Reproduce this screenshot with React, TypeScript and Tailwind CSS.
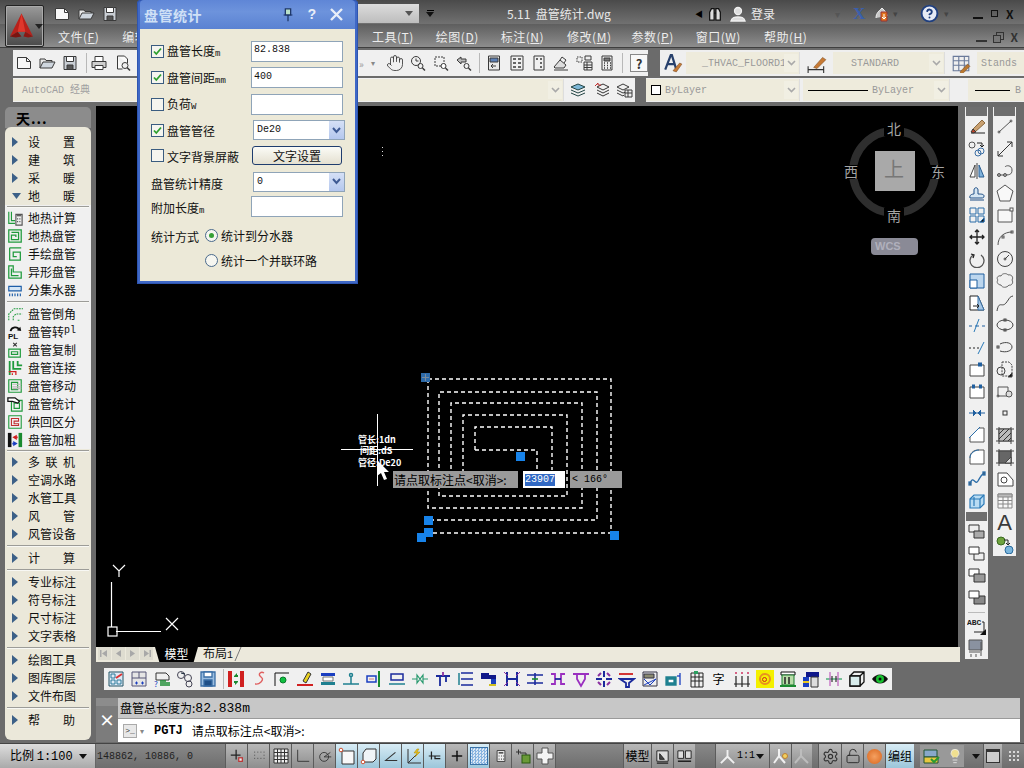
import React from 'react';
import { Hand, Settings, LockOpen, Lightbulb, CircleHelp, Plus } from 'lucide-react';

const MONO = "font-['Liberation_Mono','Noto_Sans_CJK_SC',monospace]";

type SP = { s?: number; children: React.ReactNode; c?: string; w?: number };
const Svg = ({ s = 18, children, c = '#3a3a3a', w = 1 }: SP) => (
  <svg width={s} height={s} viewBox="0 0 18 18" fill="none" stroke={c} strokeWidth={w} className="shrink-0">
    {children}
  </svg>
);

const Arrow = ({ c = '#444' }: { c?: string }) => (
  <svg width="8" height="5" viewBox="0 0 8 5" className="shrink-0"><path d="M0 0h8L4 5z" fill={c} /></svg>
);

/* ---------- generic toolbar icons ---------- */
const INew = () => <Svg><path d="M2.5 3.5h9l4 4v7h-13z" fill="#f7f7f7" /><path d="M11.5 3.5v4h4" /></Svg>;
const IOpen = () => <Svg><path d="M2 14V5h5l1 1.5h6V8" fill="#e8e8e8" /><path d="M2 14l3-6h12l-3 6z" fill="#cfd6de" /></Svg>;
const ISave = () => <Svg><path d="M3 2.5h12v13H3z" fill="#c9ced4" /><path d="M5.5 2.5h7v5h-7z" fill="#fff" /><path d="M6 11h6v4.5H6z" fill="#555" /></Svg>;
const IPrint = () => <Svg><path d="M5 2.5h8v5H5z" fill="#fff" /><path d="M2 7.5h14v6H2z" fill="#cfcfcf" /><path d="M5 11.5h8v4H5z" fill="#fff" /></Svg>;
const IPreview = () => <Svg><path d="M3.5 2h7l3 3v4M3.5 2v13h5" fill="#fafafa" /><circle cx="11" cy="11.5" r="3" /><path d="M13 13.5l3 3" strokeWidth="1.6" /></Svg>;
const IClockZoom = () => <Svg><circle cx="7" cy="7" r="4.5" /><path d="M7 4.5V7h2.5" /><circle cx="11.5" cy="12" r="2.5" /><path d="M13.5 14l2.5 2.5" strokeWidth="1.5" /></Svg>;
const IWinZoom = () => <Svg><path d="M3 3h9v9H3z" strokeDasharray="2 1" /><circle cx="11.5" cy="12" r="2.5" fill="#fff" /><path d="M13.5 14l2.5 2.5" strokeWidth="1.5" /></Svg>;
const IPrevZoom = () => <Svg><path d="M2 6l4-3v2h5v3H6v2z" fill="#bbb" /><circle cx="11.5" cy="12" r="2.5" /><path d="M13.5 14l2.5 2.5" strokeWidth="1.5" /></Svg>;
const IProp = () => <Svg><path d="M3.5 2h11v14h-11z" fill="#e8e8e8" /><path d="M5 4h8v4H5z" fill="#5b7fb5" /><path d="M11 12H6m2-2-2 2 2 2" /></Svg>;
const IDesign = () => <Svg><path d="M3 2h12v14H3z" /><path d="M5 4h3v2H5zM10 4h3v2h-3zM5 8h3v2H5zM10 8h3v2h-3zM5 12h3v2H5zM10 12h3v2h-3z" fill="#666" stroke="none" /></Svg>;
const IPalette = () => <Svg><path d="M4 2h10v14H4z" /><path d="M6 4h2v2H6zM10 4h2v2h-2zM10 8h2v2h-2zM10 12h2v2h-2z" fill="#666" stroke="none" /></Svg>;
const IStamp = () => <Svg><path d="M2 13l6-7 6 5-2 3H3z" fill="#ddd" /><path d="M8 6l2-3 4 3-2 3" /><path d="M2 16h14" /></Svg>;
const ISheet = () => <Svg><path d="M2 3h5v5H2z" strokeDasharray="1.5 1" /><path d="M10 2h6v4h-6zM9 8h8v8H9z" fill="#eee" /><path d="M9 11h8M9 13.5h8M12 8v8" /></Svg>;
const ICalc = () => <Svg><path d="M4 2h10v14H4z" fill="#eee" /><path d="M6 4h6v3H6z" fill="#777" /><path d="M6 9h1M9 9h1M12 9h1M6 11.5h1M9 11.5h1M12 11.5h1M6 14h1M9 14h1M12 14h1" strokeWidth="1.3" /></Svg>;
const IHelp = () => (
  <span className="w-[18px] h-[18px] border border-[#888] bg-[#f8f8f8] flex items-center justify-center text-[13px] font-bold leading-none text-[#333]">?</span>
);
const IA = () => <Svg s={20}><path d="M2 15L7 2h1l4 13M4 10h6" stroke="#27406c" strokeWidth="2" /><path d="M9 16l6-7 2 1-5 7z" fill="#c77a35" stroke="#7a4a20" strokeWidth=".5" /></Svg>;
const IBrushDim = () => <Svg s={20}><path d="M1 15h14M1 12v6M15 12v6" stroke="#333" /><path d="M6 13l8-9 3 2-8 8z" fill="#c77a35" stroke="#7a4a20" strokeWidth=".5" /></Svg>;
const ITableBrush = () => <Svg s={20}><path d="M2 3h14v13H2zM2 7h14M2 11h14M7 3v13M12 3v13" stroke="#6a7a9a" /><path d="M8 17l7-7 2 2-7 7z" fill="#b9772f" stroke="#7a4a20" strokeWidth=".5" /></Svg>;
const ILayer1 = () => <Svg><path d="M2 6l7-3 7 3-7 3z" fill="#7db7d8" stroke="#244" /><path d="M2 9l7 3 7-3M2 12l7 3 7-3" stroke="#244" /></Svg>;
const ILayer2 = () => <Svg><path d="M3 9l6 3 6-3M3 12l6 3 6-3M3 6l6-3 6 3-6 3z" stroke="#333" /><path d="M1 5l3-3v2h3" stroke="#c03030" /></Svg>;
const ILayer3 = () => <Svg><path d="M2 6l6-3 6 3-6 3zM2 9l6 3 3-1M2 12l6 3 1-1" /><path d="M10 9h7v7h-7zM10 12h7M13 9v7" fill="#eee" /></Svg>;

const Sp = ({ w }: { w: number }) => <div style={{ width: w }} className="shrink-0" />;
const Cell = ({ w = 23, children }: { w?: number; children: React.ReactNode }) => (
  <div style={{ width: w }} className="shrink-0 flex items-center justify-center">{children}</div>
);
const Sep = () => <div className="w-px h-[20px] bg-[#b8b8b8] shrink-0" />;
const Grip = () => (
  <div className="w-[5px] h-[18px] shrink-0 bg-[radial-gradient(#cfcfcf_40%,transparent_45%)] bg-[length:2px_2px]" />
);

const Combo = ({ w, children, ml = 0 }: { w: number; children?: React.ReactNode; ml?: number }) => (
  <div style={{ width: w, marginLeft: ml }} className="h-[22px] bg-[#eeebdc] shrink-0 flex items-center relative overflow-hidden border-r border-[#ddd]">
    {children}
    <div className="absolute right-[1px] top-[2px] w-[14px] h-[18px] bg-[#f1efe3] flex items-center justify-center">
      <svg width="9" height="6" viewBox="0 0 9 6" fill="none" stroke="#a9a9a9" strokeWidth="1.6"><path d="M1 1l3.5 3.5L8 1" /></svg>
    </div>
  </div>
);

/* ---------- top ---------- */
const Logo = () => (
  <div className="w-[39px] h-[42px] ml-[5px] mt-[5px] shrink-0 border border-[#222] rounded-[2px] bg-gradient-to-b from-[#9a9a9a] to-[#4a4a4a] flex items-center pl-[3px] gap-[1px] shadow-[inset_0_0_0_1px_#aaa]">
    <svg width="26" height="30" viewBox="0 0 26 28">
      <path d="M13 1L1 25l8-5h8l8 5z" fill="#b8211b" />
      <path d="M13 1L9 20h8z" fill="#e0372c" />
      <path d="M1 25l8-5 4 5-6 1z" fill="#7a1410" />
      <path d="M25 25l-8-5-2 5 5 1z" fill="#8c1712" />
    </svg>
    <Arrow c="#222" />
  </div>
);

const MenuItem = ({ t, k, ml }: { t: string; k: string; ml: number }) => (
  <span style={{ marginLeft: ml }} className="text-[12px] text-[#ececec] leading-none whitespace-nowrap shrink-0 tracking-[.5px]">
    {t}(<span className="underline">{k}</span>)
  </span>
);

const TopBar = () => (
  <div className="h-[48px] shrink-0 relative flex bg-[linear-gradient(#4a4a4a,#707070_50%,#5f5f5f_52%,#8d8d8d)] border-b border-[#3f3f3f]">
    <Logo />
    <div className="flex-1 flex flex-col min-w-0">
      <div className="h-[28px] flex items-center">
        <Sp w={6} />
        <Cell w={24}><INew /></Cell>
        <Cell w={24}><IOpen /></Cell>
        <Cell w={24}><ISave /></Cell>
        <Sp w={14} />
        <Sp w={222} />
        <div className="w-[61px] h-[19px] bg-[linear-gradient(#dcdcdc,#bdbdbd)] flex items-center justify-end pr-[6px] shrink-0"><Arrow c="#555" /></div>
        <Sp w={7} />
        <div className="flex flex-col items-center gap-[1px]"><div className="w-[7px] h-px bg-black" /><Arrow c="#111" /></div>
        <Sp w={73} />
        <span className="text-[12px] text-[#e8e8e8] whitespace-nowrap leading-none w-[188px]">5.11&nbsp;&nbsp;盘管统计.dwg</span>
        <span className="text-[8px] text-black w-[12px]">◀</span>
        <Svg s={16} c="#111" w={1.4}><path d="M3 16V7l2-4h3v13zM15 16V7l-2-4h-3v13z" fill="#ddd" /><path d="M8 8h2" /></Svg>
        <Sp w={6} />
        <Svg s={18} c="#f0f0f0" w={1.3}><circle cx="9" cy="6" r="3.5" fill="#ddd" /><path d="M2 16c1-4 4-4 7-4s6 0 7 4z" fill="#ddd" /></Svg>
        <Sp w={4} />
        <span className="text-[12px] text-[#ececec] leading-none w-[84px] shrink-0">登录</span>
        <span className="text-[10px] text-[#555] w-[18px] shrink-0">▾</span>
        <span className="text-[17px] font-bold text-[#3a5fae] font-['Liberation_Serif',serif] leading-none w-[20px] shrink-0">X</span>
        <Svg s={18} c="#eee"><path d="M3 13c0-5 3-7 6-10 3 3 5 5 5 8" fill="#c8c8c8" /><path d="M8 7h6v9H8z" fill="#e2761d" stroke="#933" /><path d="M11 9v4m-2-1l2 2 2-2" stroke="#fff" /></Svg>
        <span className="text-[9px] text-[#444] w-[29px] pl-[2px] shrink-0">▾</span>
        <CircleHelp size={19} strokeWidth={2.4} className="text-[#1f3f7f] fill-[#e6eaf4] shrink-0" />
        <span className="text-[9px] text-[#444] w-[30px] pl-[5px] shrink-0">▾</span>
        <div className="flex items-center gap-[8px] pl-[4px] shrink-0">
          <div className="w-[10px] h-[2px] bg-[#111] mt-[8px]" />
          <div className="w-[7px] h-[7px] border border-[#111]" />
          <span className="text-[12px] font-bold text-[#111] leading-none">X</span>
        </div>
      </div>
      <div className="h-[20px] flex items-center">
        <MenuItem t="文件" k="F" ml={14} />
        <MenuItem t="编辑" k="E" ml={23} />
        <Sp w={208} />
        <MenuItem t="工具" k="T" ml={0} />
        <MenuItem t="绘图" k="D" ml={22} />
        <MenuItem t="标注" k="N" ml={22} />
        <MenuItem t="修改" k="M" ml={23} />
        <MenuItem t="参数" k="P" ml={20} />
        <MenuItem t="窗口" k="W" ml={22} />
        <MenuItem t="帮助" k="H" ml={23} />
        <div className="flex-1" />
        <div className="flex items-center gap-[6px] pr-[6px]">
          <div className="w-[11px] h-[2px] bg-[#333] mt-[8px]" />
          <div className="relative w-[11px] h-[11px]"><div className="absolute right-0 top-0 w-[8px] h-[8px] border border-[#333]" /><div className="absolute left-0 bottom-0 w-[8px] h-[8px] border border-[#333] bg-[#777]" /></div>
          <span className="text-[12px] font-bold text-[#333] leading-none">X</span>
        </div>
      </div>
    </div>
  </div>
);

const DarkGrip = () => <div className="w-[4px] h-[18px] mx-[1px] shrink-0 bg-[radial-gradient(#d5d5d5_45%,transparent_50%)] bg-[length:2px_2px]" />;

const Toolbars = () => (
  <div className="shrink-0 bg-[#6b6b6b]">
    <div className="h-[2px]" />
    <div className="h-[26px] flex items-center overflow-hidden">
      <Sp w={6} /><DarkGrip /><Sp w={1} />
      <div className="w-[635px] h-[26px] bg-[#f0f0f0] flex items-center shrink-0">
        <Cell w={22}><INew /></Cell>
        <Cell w={23}><IOpen /></Cell>
        <Cell w={23}><ISave /></Cell>
        <Sp w={5} /><Sep />
        <Cell w={24}><IPrint /></Cell>
        <Cell w={24}><IPreview /></Cell>
        <Sp w={224} />
        <span className="text-[#999] text-[10px] w-[12px]">»</span>
        <span className="text-[#888] text-[8px] w-[12px]">▾</span>
        <Cell w={24}><Hand size={18} strokeWidth={1.1} className="text-[#333]" /></Cell>
        <Cell w={22}><IClockZoom /></Cell>
        <Cell w={23}><IWinZoom /></Cell>
        <Cell w={24}><IPrevZoom /></Cell>
        <Sp w={3} /><Sep /><Sp w={3} />
        <Cell w={22}><IProp /></Cell>
        <Cell w={23}><IDesign /></Cell>
        <Cell w={21}><IPalette /></Cell>
        <Cell w={23}><IStamp /></Cell>
        <Cell w={23}><ISheet /></Cell>
        <Cell w={23}><ICalc /></Cell>
        <Sp w={4} /><Sep /><Sp w={7} />
        <Cell w={18}><IHelp /></Cell>
      </div>
      <Sp w={5} /><DarkGrip /><Sp w={1} />
      <div className="flex-1 h-[26px] bg-[#efefef] flex items-center min-w-0">
        <Cell w={26}><IA /></Cell>
        <Combo w={114}>
          <span className={`${MONO} text-[10px] text-[#999] pl-[16px]`}>_THVAC_FLOORD1</span>
        </Combo>
        <Cell w={33}><IBrushDim /></Cell>
        <Combo w={112}>
          <span className={`${MONO} text-[10px] text-[#999] pl-[18px]`}>STANDARD</span>
        </Combo>
        <Cell w={32}><ITableBrush /></Cell>
        <div className="flex-1 h-[22px] bg-[#eeebdc] flex items-center pl-[4px] overflow-hidden">
          <span className={`${MONO} text-[10px] text-[#999]`}>Stands</span>
        </div>
      </div>
    </div>
    <div className="h-[2px]" />
    <div className="h-[24px] flex items-center overflow-hidden">
      <Sp w={6} /><DarkGrip /><Sp w={1} />
      <div className="w-[622px] h-[24px] bg-[#f0f0f0] flex items-center shrink-0">
        <Combo w={551}>
          <span className={`${MONO} text-[10px] text-[#a0a0a0] pl-[9px]`}>AutoCAD 经典</span>
        </Combo>
        <Cell w={28}><ILayer1 /></Cell>
        <Cell w={21}><ILayer2 /></Cell>
        <Cell w={22}><ILayer3 /></Cell>
      </div>
      <Sp w={3} /><DarkGrip /><Sp w={2} />
      <div className="flex-1 h-[24px] bg-[#efefef] flex items-center min-w-0">
        <Combo w={154}>
          <div className="w-[10px] h-[10px] border border-black bg-white ml-[5px] shrink-0" />
          <span className={`${MONO} text-[10px] text-[#999] pl-[4px]`}>ByLayer</span>
        </Combo>
        <Combo w={147} ml={3}>
          <div className="w-[60px] h-px bg-black ml-[5px] shrink-0" />
          <span className={`${MONO} text-[10px] text-[#999] pl-[4px]`}>ByLayer</span>
        </Combo>
        <Sp w={18} />
        <div className="flex-1 h-[22px] bg-[#eeebdc] flex items-center overflow-hidden">
          <div className="w-[35px] h-px bg-black ml-[7px] shrink-0" />
          <span className={`${MONO} text-[10px] text-[#999] pl-[5px]`}>B</span>
        </div>
      </div>
    </div>
    <div className="h-[4px]" />
  </div>
);

/* ---------- left palette ---------- */
const G = '#1f9a3c';
const Pal: Record<string, React.ReactNode> = {
  a: <Svg s={16} c={G} w={1.3}><path d="M2 2v13h7M5 2v10h4" /><path d="M10 5h7v12h-7z" fill="#eee" stroke="#555" /><path d="M11 6.5h5M11.5 10h1M14 10h1M11.5 13h1M14 13h1" stroke="#333" /></Svg>,
  b: <Svg s={16} c={G} w={1.4}><path d="M2 2h14v14H2zM5 5h8v8H5v-5h5v2" /></Svg>,
  c: <Svg s={16} c={G} w={1.4}><path d="M3 2h13M3 2v14h12V7H7v5h4" /></Svg>,
  d: <Svg s={16} c={G} w={1.4}><path d="M2 2h5v7h9v7H2zM5 5v8h8" /></Svg>,
  e: <Svg s={16} c="#1e5ea8" w={1.3}><path d="M2 5h14v5H2z" fill="#d5e6f5" /><path d="M3 13v3M6 13v3M9 13v3M12 13v3M15 13v3" /></Svg>,
  f: <Svg s={16} c={G} w={1.2}><path d="M2 16V9l6-6h10M7 16v-4l3-3h7M12 16h3" strokeDasharray="2 1" /></Svg>,
  g: <svg width="16" height="16" viewBox="0 0 18 18" className="shrink-0"><path d="M4 8c1-5 8-6 10-1" fill="none" stroke="#111" strokeWidth="2" /><path d="M11 7l5 1-1-5z" fill="#111" /><text x="1" y="17" fontSize="9" fontWeight="700" fontFamily="Liberation Sans" fill="#111">PL</text></svg>,
  h: <Svg s={16} c={G} w={1.3}><path d="M2 8h13v9H2zM5 11h7v3H5z" /><path d="M7 1l4 4M11 1L7 5" stroke="#333" /></Svg>,
  i: <Svg s={16} c="#d02020" w={1.4}><path d="M3 1v16M7 1v9h9" stroke={G} strokeWidth="2" /><path d="M12 1v5h5" stroke={G} strokeWidth="2" /><path d="M2 13h8v4M6 17v-2" /></Svg>,
  j: <Svg s={16} c={G} w={1.3}><path d="M2 2h14v14H2zM5 5h7v8H5z" /><path d="M6 7h10M6 10h10M6 12h10" stroke="#bbb" /></Svg>,
  k: <Svg s={16} c={G} w={1.3}><path d="M5 5h12v12H5zM8 8h6v6H8z" /><path d="M1 2h8l5 4-2 2-6-2H1z" fill="#fff" stroke="#111" strokeWidth="1.4" /></Svg>,
  l: <Svg s={16} c={G} w={1.2}><path d="M2 2h14v14H2z" /><path d="M5 13V5h8v3H8v3h5v2z" stroke="#c03030" /></Svg>,
  m: <svg width="16" height="16" viewBox="0 0 18 18" className="shrink-0"><path d="M1 1h4v16H1z" fill="#111" /><path d="M13 1h4v16h-4z" fill="#1a8a30" /><path d="M6 6l5-3v2h1v2h-1v2z" fill="#d02020" /><path d="M12 13l-5-3v2H6v2h1v2z" fill="#1a3ec0" /></svg>,
};

const Tri = ({ down }: { down?: boolean }) => (
  <div className="w-[23px] pl-[7px] shrink-0 flex items-center">
    {down ? (
      <svg width="9" height="6" viewBox="0 0 9 6"><path d="M0 0h9L4.5 6z" fill="#3c6088" /></svg>
    ) : (
      <svg width="6" height="10" viewBox="0 0 6 10"><path d="M0 0l6 5-6 5z" fill="#3c6088" /></svg>
    )}
  </div>
);

const Label = ({ t }: { t: string }) => (
  <div className="w-[47px] flex justify-between text-[12px] leading-none text-[#111]">
    {Array.from(t).map((ch, i) => <span key={i}>{ch}</span>)}
  </div>
);
const TriRow = ({ t, down }: { t: string; down?: boolean }) => (
  <div className="h-[18px] flex items-center"><Tri down={down} /><Label t={t} /></div>
);
const IconRow = ({ i, t, extra }: { i: string; t: string; extra?: string }) => (
  <div className="h-[18px] flex items-center">
    <div className="w-[23px] pl-[2px] shrink-0 flex items-center">{Pal[i]}</div>
    <div className="flex text-[12px] leading-none text-[#111] whitespace-nowrap">
      {t}{extra && <span className={`${MONO} text-[10px]`}>{extra}</span>}
    </div>
  </div>
);
const Dv = ({ h }: { h: number }) => (
  <div style={{ height: h }} className="flex flex-col justify-center px-[2px]"><div className="h-px bg-[#9c9c98]" /><div className="h-px bg-[#f8f8f4]" /></div>
);

const Palette = () => (
  <div className="w-[96px] shrink-0 pl-[5px] pt-[1px] pr-[5px]">
    <div className="h-[21px] rounded-t-[5px] bg-[#8c8c8c] flex items-center">
      <div className="w-[3px] h-[12px] ml-[3px] bg-[radial-gradient(#eee_45%,transparent_50%)] bg-[length:2px_2px]" />
      <span className="text-[14px] font-bold leading-none text-black ml-[5px] tracking-[1px]">天...</span>
    </div>
    <div className="rounded-[6px] bg-[#ebe8da] pt-[6px] pb-[11px] -mt-[1px]">
      <TriRow t="设置" /><TriRow t="建筑" /><TriRow t="采暖" /><TriRow t="地暖" down />
      <div className="bg-[#f0f0f0]">
        <Dv h={4} />
        <IconRow i="a" t="地热计算" /><IconRow i="b" t="地热盘管" /><IconRow i="c" t="手绘盘管" /><IconRow i="d" t="异形盘管" /><IconRow i="e" t="分集水器" />
        <Dv h={6} />
        <IconRow i="f" t="盘管倒角" /><IconRow i="g" t="盘管转" extra="pl" /><IconRow i="h" t="盘管复制" /><IconRow i="i" t="盘管连接" /><IconRow i="j" t="盘管移动" /><IconRow i="k" t="盘管统计" /><IconRow i="l" t="供回区分" /><IconRow i="m" t="盘管加粗" />
      </div>
      <Dv h={4} />
      <TriRow t="多联机" /><TriRow t="空调水路" /><TriRow t="水管工具" /><TriRow t="风管" /><TriRow t="风管设备" />
      <Dv h={6} />
      <TriRow t="计算" />
      <Dv h={6} />
      <TriRow t="专业标注" /><TriRow t="符号标注" /><TriRow t="尺寸标注" /><TriRow t="文字表格" />
      <Dv h={6} />
      <TriRow t="绘图工具" /><TriRow t="图库图层" /><TriRow t="文件布图" />
      <Dv h={6} />
      <TriRow t="帮助" />
    </div>
  </div>
);

/* ---------- drawing ---------- */
const Drawing = () => (
  <div className="relative w-[862px] h-[541px] bg-black overflow-hidden">
    <svg width="862" height="541" viewBox="96 106 862 541" className="absolute inset-0">
      <g fill="none" stroke="#fff" strokeWidth="1.4" strokeDasharray="4 3">
        <path d="M428 379H611V533H430" />
        <path d="M428 379V508H582V403H451V484" />
        <path d="M430 520H597V392H439V496H567V415H463V478" />
        <path d="M475 450V427H552V470M475 450H537V470" />
      </g>
      <rect x="421" y="373" width="9" height="9" fill="#2d6aa8" />
      <path d="M425.500 374v7M422 377.500h7" stroke="#7a8a9a" />
      <rect x="516" y="452" width="9" height="9" fill="#1783ea" />
      <rect x="424" y="516" width="9" height="9" fill="#1783ea" />
      <rect x="424" y="528" width="9" height="9" fill="#1783ea" />
      <rect x="417" y="533" width="9" height="9" fill="#1783ea" />
      <rect x="610" y="531" width="9" height="9" fill="#1783ea" />
      {/* crosshair */}
      <path d="M341 449.500H413M377.500 414V486" stroke="#fff" strokeWidth="1" />
      <text x="358" y="443" fontSize="9" fontWeight="700" fill="#fff" fontFamily="Noto Sans CJK SC">管长:1dn</text>
      <text x="360" y="454" fontSize="9" fontWeight="700" fill="#fff" fontFamily="Noto Sans CJK SC">间距:dS</text>
      <text x="358" y="466" fontSize="9" fontWeight="700" fill="#fff" fontFamily="Noto Sans CJK SC">管径:De20</text>
      <path d="M377 460v16l4-3 3 7 3-1-3-7h5z" fill="#fff" />
      {/* small mark */}
      <path d="M382.500 147v10" stroke="#ddd" strokeDasharray="1 3" />
      {/* compass */}
      <circle cx="894" cy="172" r="41" fill="none" stroke="#2e2e2e" strokeWidth="8" />
      <rect x="875" y="151" width="40" height="40" fill="#a9a9a9" />
      <text x="894" y="177" textAnchor="middle" fontSize="20" fill="#777" fontFamily="Noto Sans CJK SC">上</text>
      <g fontSize="14" fill="#a5a5a5" fontFamily="Noto Sans CJK SC" textAnchor="middle">
        <rect x="884" y="122" width="20" height="14" fill="#000" />
        <text x="894" y="134">北</text>
        <rect x="928" y="165" width="18" height="14" fill="#000" />
        <text x="938" y="177">东</text>
        <rect x="884" y="208" width="20" height="14" fill="#000" />
        <text x="894" y="221">南</text>
        <rect x="842" y="165" width="18" height="14" fill="#000" />
        <text x="851" y="177">西</text>
      </g>
      <rect x="871" y="238" width="47" height="17" rx="4" fill="#8a8a96" />
      <text x="875" y="250" fontSize="11" fontWeight="700" fill="#b0b0bc" fontFamily="Liberation Sans">WCS</text>
      {/* UCS */}
      <g stroke="#fff" fill="none" strokeWidth="1.2">
        <path d="M111.500 582V627M116 631.500H161" />
        <rect x="108" y="627" width="9" height="9" />
        <path d="M113 565l6 6 6-6M119 571v6" />
        <path d="M166 618l12 12M178 618l-12 12" />
      </g>
    </svg>
    <div className="absolute left-[297px] top-[365px] w-[125px] h-[17px] bg-[#9a9a9a] flex items-center pl-[1px]">
      <span className="text-[12px] leading-none text-black whitespace-nowrap">请点取标注点&lt;取消&gt;:</span>
    </div>
    <div className="absolute left-[427px] top-[365px] w-[42px] h-[17px] bg-white flex items-center pl-[2px]">
      <span className={`${MONO} text-[10px] leading-[12px] bg-[#3169c4] text-white`}>23907</span>
    </div>
    <div className="absolute left-[474px] top-[365px] w-[52px] h-[17px] bg-[#9a9a9a] flex items-center pl-[2px]">
      <span className={`${MONO} text-[10px] leading-none text-black`}>&lt; 166°</span>
    </div>
  </div>
);

/* ---------- right toolbars ---------- */
const RI: Record<string, React.ReactNode> = {
  r1: <Svg><path d="M3 15h14" stroke="#222" /><path d="M4 12L14 2l3 3L7 14z" fill="#c9a070" stroke="#8a6a40" /><path d="M3 14l2-3 3 3-3 1z" fill="#b8442a" /></Svg>,
  r2: <Svg c="#3b6ea5"><circle cx="4" cy="5" r="3" stroke="#555" /><circle cx="10" cy="13" r="3" /><circle cx="13" cy="11" r="3" /><path d="M9 3h5v3m-2-1l2 2 2-2" stroke="#222" /></Svg>,
  r3: <Svg><path d="M7 3L2 15h5z" fill="#fff" stroke="#444" /><path d="M9 1v16" stroke="#444" /><path d="M11 3l5 12h-5z" fill="#7fb2dc" stroke="#2b5f92" /></Svg>,
  r4: <Svg c="#1f4f86"><path d="M2 14c-1-3 2-4 4-4V6c0-3 4-3 4 0v4c3 0 6 0 6 2s-1 2-3 2z" fill="#d6e6f2" /><path d="M2 16h14" /></Svg>,
  r5: <Svg c="#2b6da8"><path d="M2 2h6v6H2zM10 2h6v6h-6zM2 10h6v6H2z" /><path d="M10 10h6v6h-6z" /><path d="M12 16l4-4v4z" fill="#111" /></Svg>,
  r6: <Svg c="#222" w={1.3}><path d="M9 2v14M2 9h14M7 4l2-2 2 2M7 14l2 2 2-2M4 7L2 9l2 2M14 7l2 2-2 2" /></Svg>,
  r7: <Svg c="#555" w={1.3}><path d="M13 5a7 7 0 11-8 0" /><path d="M3 4l3 1-1 3" stroke="#222" /></Svg>,
  r8: <Svg c="#1f5f9f"><path d="M2 2h14v14H2z" fill="#bcd6ee" /><path d="M2 8h7v8H2z" fill="#fff" /></Svg>,
  r9: <Svg c="#222"><path d="M2 2h8l6 14H2z" fill="#fff" /><path d="M10 2l6 14h-6z" fill="#a8c8e6" stroke="#3a72a8" /><path d="M5 12h6m-2-2l2 2-2 2" /></Svg>,
  r10: <Svg c="#1f5f9f"><path d="M1 10h3M7 10h4M14 10h3" /><path d="M6 16l5-13" stroke="#2a7ab8" /></Svg>,
  r11: <Svg c="#222"><path d="M1 10h2M5 10h2M9 10h2" /><path d="M10 16l6-12" stroke="#2a7ab8" /></Svg>,
  r12: <Svg c="#444"><path d="M2 5h14v11H2z" fill="#fff" /><rect x="10" y="2.500" width="4" height="4" fill="#1f5f9f" stroke="none" /></Svg>,
  r13: <Svg c="#444"><path d="M2 5h14v11H2z" fill="#fff" /><rect x="4" y="2.500" width="3" height="4" fill="#1f5f9f" stroke="none" /><rect x="11" y="2.500" width="3" height="4" fill="#1f5f9f" stroke="none" /></Svg>,
  r14: <Svg c="#1f5f9f"><path d="M1 9h16" /><path d="M5 6l3 3-3 3M13 6l-3 3 3 3" fill="#1f5f9f" /></Svg>,
  r15: <Svg c="#555"><path d="M2 16V11L11 2h5v14z" fill="#fff" /><path d="M1 12L12 1" stroke="#2b6da8" /></Svg>,
  r16: <Svg c="#555"><path d="M2 16V9C2 5 6 2 10 2h6v14z" fill="#fff" /><path d="M2 10c0-5 5-8 9-8" stroke="#2b6da8" /></Svg>,
  r17: <Svg c="#2b6da8" w={1.3}><path d="M2 14c3-10 5 2 8-3s3-6 6-8" /><rect x="1" y="12" width="2" height="3" fill="#555" /><rect x="15" y="2" width="2" height="3" fill="#555" /></Svg>,
  r18: <Svg c="#2a7ab8" w={1.2}><path d="M2 7l4-4h10v9l-4 4H2z" fill="#b9dcf3" /><path d="M2 7h10v9M12 7l4-4" /><path d="M6 5v9" /></Svg>,
  d1: <Svg c="#555"><path d="M3 14L15 3" /><circle cx="3" cy="14" r="1" /><circle cx="15" cy="3" r="1" /></Svg>,
  d2: <Svg c="#333" w={1}><path d="M2 16L16 2M2 11v5h5M11 2h5v5" /></Svg>,
  d3: <Svg c="#555"><path d="M1 13h6c6 0 9 0 9-5s-6-5-7-3" /><circle cx="3" cy="13" r="1.5" /><circle cx="9" cy="13" r="1.5" /></Svg>,
  d4: <Svg c="#555"><path d="M9 1l8 6-3 10H4L1 7z" fill="#f8f8f8" /></Svg>,
  d5: <Svg c="#555"><path d="M2 4h14v12H2z" fill="#f8f8f8" /><rect x="14" y="2" width="3" height="3" fill="#fff" /></Svg>,
  d6: <Svg c="#555"><path d="M2 17c0-8 6-13 14-13" /><rect x="15" y="3" width="2" height="2" /><rect x="6" y="8" width="2" height="2" /></Svg>,
  d7: <Svg c="#444"><circle cx="9" cy="9" r="7.5" /><circle cx="9" cy="9" r="1" /><path d="M9 9l4-4" /></Svg>,
  d8: <Svg c="#666"><path d="M5 4c1-3 6-3 7-1 3-1 6 2 4 5 2 3-1 6-3 5-2 3-7 3-8 0-3 0-5-3-3-5-2-2 0-5 3-4z" /></Svg>,
  d9: <Svg c="#444"><path d="M1 17C3 6 6 14 10 9s3-6 7-7" /></Svg>,
  d10: <Svg c="#444"><ellipse cx="9" cy="9" rx="8" ry="5" /><rect x="8" y="3" width="2" height="2" /><rect x="8" y="13" width="2" height="2" /></Svg>,
  d11: <Svg c="#444"><path d="M4 6c6-3 12-1 12 3s-6 6-12 4" /><rect x="1" y="8" width="2" height="2" /></Svg>,
  d12: <Svg c="#444"><path d="M6 2h7l3 3v11H6z" strokeDasharray="2 1" /><circle cx="5" cy="11" r="4" /><path d="M12 17l4-4v4z" fill="#111" /></Svg>,
  d13: <Svg c="#555"><path d="M2 5h10v9H2z" /><circle cx="13" cy="12" r="3" fill="#ddd" /><circle cx="2" cy="14" r="1" /></Svg>,
  d14: <svg width="18" height="18" className="shrink-0"><rect x="7" y="7" width="4" height="4" fill="none" stroke="#333" /></svg>,
  d15: <Svg c="#444"><path d="M3 1v17M15 1v17M0 3h18M0 15h18" /><path d="M3 3h12v12H3z" fill="#bbb" /><path d="M3 8l5-5M3 13l10-10M7 15l8-8M12 15l3-3" stroke="#333" /></Svg>,
  d16: <Svg c="#444"><path d="M3 1v17M15 1v17M0 3h18M0 15h18" /><path d="M3 3h12v12H3z" fill="#666" /><path d="M15 9v6H9z" fill="#ddd" /></Svg>,
  d17: <Svg c="#444"><path d="M2 3h9l6 7v6H2z" fill="#fff" /><circle cx="8" cy="10" r="3" /></Svg>,
  d18: <Svg c="#888"><path d="M2 2h14v14H2z" fill="#f8f8f8" /><path d="M2 2h14v3H2z" fill="#bbb" /><path d="M2 8.500h14M2 12h14M7 5v11M12 5v11" /></Svg>,
  d19: <span className="font-['Liberation_Sans',sans-serif] text-[22px] leading-none text-[#3a3a3a]">A</span>,
  d20: <Svg><circle cx="5" cy="5" r="4" fill="#6fa33f" stroke="#3a6a20" /><circle cx="13" cy="14" r="4" fill="#7ab5dc" stroke="#2a6a9c" /><path d="M8 4h4v4m-2-1l2 2 2-2" stroke="#222" /></Svg>,
  t1: <Svg c="#333"><path d="M1 2h10v7H1z" fill="#eee" /><path d="M6 8h10v7H6z" fill="#aaa" /></Svg>,
  t2: <Svg c="#333"><path d="M6 8h10v7H6z" fill="#eee" /><path d="M1 2h10v7H1z" fill="#fff" /></Svg>,
  t3: <Svg c="#333"><path d="M1 2h10v7H1z" fill="#fff" /><path d="M6 7h11v8H6z" fill="#999" /></Svg>,
  t4: <Svg c="#333"><path d="M6 7h11v8H6z" fill="#888" /><path d="M1 2h10v7H1z" fill="#fff" /></Svg>,
  t5: <svg width="20" height="20" viewBox="0 0 20 20" className="shrink-0"><text x="0" y="9" fontSize="8" fontWeight="700" fontFamily="Liberation Mono" fill="#222">ABC</text><path d="M15 6h2v10H7" fill="none" stroke="#222" /><path d="M13 19l6-6v6z" fill="#111" /></svg>,
  t6: <Svg c="#555"><path d="M1 1h13v10H1z" fill="#8a92a0" /><path d="M1 13h11M13 3v14M3 15v3M8 15v3" /></Svg>,
};

const RIcon = ({ k }: { k: string }) => <div className="h-[22px] flex items-center justify-center">{RI[k]}</div>;
const RGrip = () => <div className="h-[9px] mx-[1px] bg-[#6e6e6e] flex items-center justify-center"><div className="w-[14px] h-[5px] bg-[radial-gradient(#ddd_45%,transparent_50%)] bg-[length:2px_2px]" /></div>;

const RightBars = () => (
  <div className="flex-1 flex items-start pl-[5px] gap-[5px] pt-[1px]">
    <div className="w-[23px] flex flex-col">
      <div className="bg-[#f0f0f0]">
        <RGrip />
        {['r1','r2','r3','r4','r5','r6','r7','r8','r9','r10','r11','r12','r13','r14','r15','r16','r17','r18'].map(k => <RIcon key={k} k={k} />)}
      </div>
      <div className="bg-[#f0f0f0]">
        <RGrip />
        <RIcon k="t1" /><RIcon k="t2" /><RIcon k="t3" /><RIcon k="t4" />
        <div className="h-[6px] flex items-center px-[3px]"><div className="h-px w-full bg-[#bbb]" /></div>
        <RIcon k="t5" /><RIcon k="t6" />
      </div>
    </div>
    <div className="w-[23px] bg-[#f0f0f0]">
      <RGrip />
      {['d1','d2','d3','d4','d5','d6','d7','d8','d9','d10','d11','d12','d13','d14','d15','d16','d17','d18','d19','d20'].map(k => <RIcon key={k} k={k} />)}
    </div>
  </div>
);

/* ---------- tabs + icon bar ---------- */
const NavBtn = ({ d, bar }: { d: 'l' | 'r'; bar?: 'l' | 'r' }) => (
  <div className="w-[13px] h-[13px] bg-[#dedcd0] flex items-center justify-center">
    <svg width="9" height="9" viewBox="0 0 9 9" fill="#a8a8a8">
      {d === 'l' ? <path d="M7 1v7L2 4.500z" /> : <path d="M2 1v7l5-3.500z" />}
      {bar === 'l' && <path d="M0 1h1.500v7H0z" />}
      {bar === 'r' && <path d="M7.500 1H9v7H7.500z" />}
    </svg>
  </div>
);

const Tabs = () => (
  <div className="w-[864px] h-[15px] bg-[#ece9dc] flex items-start text-[12px] leading-[14px]">
    <div className="flex gap-[1px] pl-[2px] w-[59px] shrink-0">
      <NavBtn d="l" bar="l" /><NavBtn d="l" /><NavBtn d="r" /><NavBtn d="r" bar="r" />
    </div>
    <div className="h-[15px] w-[43px] bg-black text-white text-center [clip-path:polygon(0_0,100%_0,90%_100%,10%_100%)] shrink-0">模型</div>
    <div className="h-[14px] flex items-center text-[#111] shrink-0 pl-[5px]">
      <span className="leading-[14px] whitespace-nowrap">布局<span className={`${MONO} text-[10px]`}>1</span></span>
      <svg width="8" height="14" viewBox="0 0 8 14" className="ml-[1px]"><path d="M7 0L1 14" stroke="#777" fill="none" /></svg>
    </div>
  </div>
);

const Bc = ({ children }: { children: React.ReactNode }) => <Cell w={23}>{children}</Cell>;
const B1 = '#1a2a9c';
const Bar: React.ReactNode[] = [
  <Svg c="#256"><path d="M2 2h14v14H2z" fill="#dfe9f5" /><path d="M4 4h4v4H4zM4 10h4v4H4zM10 10h4v4h-4z" stroke="#2a7a9a" /><path d="M9 8l6-4" stroke="#d33" strokeWidth="2" /></Svg>,
  <Svg c="#557"><path d="M2 2h14v14H2z" fill="#e5e5e5" /><path d="M9 2v6M2 8h14" /><path d="M5 13h3M6.500 11.500v3M11 13h3M12.500 11.500v3" stroke="#1a3ec0" /></Svg>,
  <Svg c="#333"><path d="M3 3h10l3 3v4H3z" /><text x="1" y="17" fontSize="8" fill="#1a3ec0" stroke="none">?</text><path d="M7 15h10M7 13h10M7 11h6" stroke="#1a8a30" strokeWidth="1.5" /></Svg>,
  <Svg c="#445"><circle cx="5" cy="5" r="3.500" /><circle cx="12" cy="8" r="3.500" /><circle cx="13" cy="14" r="3" /><path d="M5 3l4 1" stroke="#123" /></Svg>,
  <Svg c="#3a6ea5" w={1.3}><path d="M2 2h14v14H2z" fill="#9abde0" /><path d="M5 2h8v5H5z" fill="#fff" /><path d="M5 10h8v6H5z" fill="#1f4f86" /></Svg>,
  <svg width="18" height="18" viewBox="0 0 18 18" className="shrink-0"><rect x="1" y="1" width="4" height="16" fill="#d02020" /><rect x="13" y="1" width="4" height="16" fill="#d02020" /><path d="M7 6l3-3v2h1v2H7zM11 12l-3 3v-2H7v-2h4z" fill="#1a8a30" /></svg>,
  <Svg c="#e06060" w={1.4}><path d="M14 3c-3-2-6 1-4 3s4 3 1 6-5 2-6 2" /></Svg>,
  <Svg c="#111"><path d="M2 16V3h14" /><circle cx="10" cy="10" r="3" fill="#10c040" stroke="#0a7a2a" /></Svg>,
  <svg width="18" height="18" viewBox="0 0 18 18" className="shrink-0"><path d="M7 11l5-9 3 2-5 9z" fill="#e8d020" stroke="#333" /><path d="M1 15h16" stroke="#d02020" strokeWidth="2" /></svg>,
  <svg width="18" height="18" viewBox="0 0 18 18" className="shrink-0"><path d="M2 3h14v3H2z" fill="#1a3ec0" /><path d="M4 7h10v4H4z" fill="#fff" stroke="#777" /><path d="M2 12h14v3H2z" fill="#1f8090" /></svg>,
  <Svg c="#1f8090" w={1.5}><path d="M1 14h16M9 14V7" /><circle cx="9" cy="5" r="1.500" /></Svg>,
  <svg width="18" height="18" viewBox="0 0 18 18" className="shrink-0"><path d="M14 1v16" stroke="#1a8a30" strokeWidth="2" /><path d="M2 6h9v6H2z" fill="none" stroke="#1a3ec0" strokeWidth="1.500" /><path d="M4 9h5" stroke="#d08080" /></svg>,
  <Svg c="#1f8090" w={1.5}><path d="M3 4h12v6H3z" stroke={B1} /><path d="M1 14h16" /></Svg>,
  <Svg c="#2a9a70" w={1.2}><path d="M1 9h5M12 9h5M6 5l6 8V5l-6 8z" /></Svg>,
  <Svg c={B1} w={1.8}><path d="M2 6h14M6 6v10M12 6v6" /><path d="M9 2v4" stroke="#8a30a0" /></Svg>,
  <Svg c="#1f8090" w={1.5}><path d="M4 3h12M4 9h12M4 15h12" stroke={B1} /><path d="M2 3v12" /></Svg>,
  <svg width="18" height="18" viewBox="0 0 18 18" className="shrink-0"><path d="M1 3h8v6H1z" fill="#10188a" /><path d="M9 5h7v4H9z" fill="#10188a" /><path d="M11 9h5v7h-5z" fill="#1a40c0" /><path d="M9 15h7" stroke="#d0c020" strokeWidth="2" /></svg>,
  <Svg c={B1} w={2}><path d="M4 2v14M14 2v14M4 9h10" /><path d="M1 2l4 4M17 2l-4 4M1 16l4-4M17 16l-4-4" stroke="#8a30a0" strokeWidth="1" /></Svg>,
  <Svg c={B1} w={1.6}><path d="M1 5h16M1 13h16M9 3v12" /><path d="M6 9h6" stroke="#1a8a30" /></Svg>,
  <Svg c="#9a30c0" w={1.8}><path d="M2 4h4v10H2M16 4h-4v10h4" /><path d="M6 9h6" stroke={B1} /></Svg>,
  <Svg c="#9a30c0" w={1.8}><path d="M1 4h16M5 4v5l4 7 4-7V4" /></Svg>,
  <Svg c={B1} w={2}><path d="M9 1v6M9 11v6M1 9h6M11 9h6" /><path d="M3 6l3-3M15 6l-3-3M3 12l3 3M15 12l-3 3" stroke="#8a30a0" /></Svg>,
  <Svg c="#d02020" w={1.8}><path d="M1 4h14" /><path d="M2 9h14l-5 4v4H8v-4z" stroke={B1} /></Svg>,
  <Svg c="#334"><path d="M2 2h14v14H2z" fill="#eee" /><path d="M3 4h10v4H3z" fill="#8a8a70" /><path d="M3 9l6 6 6-6M3 15l12-6" stroke="#1a3ec0" /></Svg>,
  <Svg c="#1f8090" w={1.3}><path d="M2 7h10v8H2z" fill="#1f8090" /><path d="M4 9h6v4H4z" fill="#fff" /><path d="M16 3v12" stroke="#1a3ec0" /><path d="M13 6h3" stroke="#1a3ec0" /></Svg>,
  <Svg c="#222"><path d="M4 3h12v14H4zM4 7h12M4 11h12M8 3v14M12 3v14" /><path d="M7 1h4v3H7z" fill="#2ba060" stroke="none" /></Svg>,
  <span className="text-[12px] leading-none text-black">字</span>,
  <Svg c="#222" w={1.2}><path d="M3 6v11M9 6v11M15 6v11M1 14h16" /><path d="M3 2v2M9 2v2M15 2v2" stroke="#d03060" strokeWidth="1.500" /></Svg>,
  <div className="w-[18px] h-[18px] bg-[#f4f000] flex items-center justify-center"><div className="w-[12px] h-[12px] rounded-full border-2 border-[#e89020] flex items-center justify-center"><div className="w-[5px] h-[5px] rounded-full border border-[#d02020]" /></div></div>,
  <svg width="18" height="18" viewBox="0 0 18 18" className="shrink-0"><path d="M2 2h14v3H2z" fill="#fff" stroke="#111" /><path d="M3 5h12v10H3z" fill="#b8dca8" stroke="#1a7a30" /><path d="M6 7v7M10 7v7" stroke="#222" strokeWidth="1.500" /><path d="M1 15h16v2H1z" fill="#1a8a30" /></svg>,
  <svg width="18" height="18" viewBox="0 0 18 18" className="shrink-0"><path d="M1 7h6v10H1z" fill="#1a3ec0" /><path d="M4 2h13v5H4z" fill="#10188a" /><path d="M9 7h7v10H9z" fill="#ddd" stroke="#333" /><path d="M1 12h6" stroke="#e8c820" strokeWidth="2" /></svg>,
  <Svg c="#2aa060" w={1.2}><path d="M1 9h16" /><path d="M5 2v14M13 2v14" stroke="#c060c0" /><path d="M7 6v6M11 6v6" stroke="#333" /></Svg>,
  <Svg c="#111" w={1.3}><path d="M2 6l4-4h10v10l-4 4H2zM2 6h10v10M12 6l4-4" /><path d="M2 6h10v10H2z" fill="#d8ecec" /></Svg>,
  <svg width="18" height="18" viewBox="0 0 18 18" className="shrink-0"><path d="M1 9c4-6 12-6 16 0-4 6-12 6-16 0z" fill="#111" /><circle cx="9" cy="9" r="4" fill="#18c030" /><circle cx="9" cy="9" r="1.500" fill="#111" /></svg>,
];

const IconBar = () => (
  <div className="h-[22px] w-[796px] flex items-center overflow-hidden">
    <div className="w-[8px] h-[22px] bg-[#6b6b6b] flex items-center pl-[2px] shrink-0"><Grip /></div>
    <div className="flex-1 h-[22px] bg-[#f0f0f0] flex items-center min-w-0">
      {Bar.slice(0, 5).map((b, i) => <Bc key={i}>{b}</Bc>)}
      <Sp w={4} /><Sep />
      {Bar.slice(5).map((b, i) => <Bc key={i}>{b}</Bc>)}
    </div>
  </div>
);

const Command = () => (
  <div className="h-[44px] w-[924px] flex overflow-hidden">
    <div className="w-[22px] shrink-0 bg-[#7c7c7c] flex flex-col items-center relative">
      <div className="w-full h-[8px] bg-[#8c8c8c] flex items-center justify-center"><div className="w-[14px] h-[4px] bg-[radial-gradient(#ddd_45%,transparent_50%)] bg-[length:2px_2px]" /></div>
      <span className="text-[16px] font-bold text-white leading-none mt-[5px]">×</span>
    </div>
    <div className="flex-1 flex flex-col min-w-0">
      <div className="h-[21px] bg-[#c7c7c7] border-b border-[#9a9a9a] flex items-center pl-[2px] text-[12px] leading-none text-black whitespace-nowrap">
        盘管总长度为:<span className={`${MONO} text-[13px]`}>82.838m</span>
      </div>
      <div className="flex-1 bg-white flex items-center pl-[5px] text-[12px] leading-none text-black whitespace-nowrap">
        <div className="w-[14px] h-[14px] border border-[#aaa] bg-[#e8e8e8] flex items-center justify-center mr-[3px]">
          <span className={`${MONO} text-[8px] leading-none text-[#333]`}>&gt;_</span>
        </div>
        <span className="text-[8px] text-[#888] mr-[10px]">▾</span>
        <span className={`${MONO} font-bold text-[12px] mr-[9px]`}>PGTJ</span>
        请点取标注点&lt;取消&gt;:
      </div>
    </div>
  </div>
);

/* ---------- status ---------- */
const StB = ({ on, w = 22, children }: { on?: boolean; w?: number; children?: React.ReactNode }) => (
  <div style={{ width: w }} className={`h-[24px] shrink-0 border-l border-[#5c5c5c] flex items-center justify-center ${on ? 'bg-[linear-gradient(#d8ecf5,#9cc6da)]' : 'bg-[linear-gradient(#b8b8b8,#8e8e8e)]'}`}>
    {children}
  </div>
);

const Status = () => (
  <div className="h-[25px] shrink-0 flex items-center bg-[linear-gradient(#888,#6e6e6e)] border-t border-[#444]">
    <div className="w-[96px] h-[24px] flex items-center pl-[10px] gap-[6px] bg-[linear-gradient(#ddd,#aaa)] border-r border-[#666] shrink-0">
      <span className="text-[12px] leading-none text-black whitespace-nowrap">比例 <span className={`${MONO} text-[12px]`}>1:100</span></span>
      <Arrow c="#111" />
    </div>
    <span className={`${MONO} text-[10px] w-[129px] pl-[1px] text-[#222] whitespace-nowrap shrink-0`}>148862, 10886, 0</span>
    <StB><Svg s={16} c="#222" w={1.4}><path d="M8 2v11M2 8h11" /><rect x="11" y="11" width="4" height="4" fill="#eee" stroke="#b33" /></Svg></StB>
    <StB><Svg s={14} c="#222"><path d="M3 4h1M7 4h1M11 4h1M15 4h1M3 8h1M15 8h1M3 12h1M7 12h1M11 12h1M15 12h1" /></Svg></StB>
    <StB><Svg s={18} c="#333"><path d="M2 2h14v14H2zM2 5.500h14M2 9h14M2 12.500h14M5.500 2v14M9 2v14M12.500 2v14" fill="#eee" /></Svg></StB>
    <StB><Svg s={16} c="#333"><path d="M3 2v13h13" /></Svg></StB>
    <StB><Svg s={16} c="#333"><circle cx="8" cy="10" r="5" /><path d="M8 10l7-5M8 10h8" /></Svg></StB>
    <StB on><Svg c="#333"><path d="M4 4h12v13H4z" fill="#f8f8f8" /><circle cx="3" cy="3" r="1.800" fill="#fff" stroke="#d05030" /></Svg></StB>
    <StB on><Svg c="#333"><path d="M3 6l3-4h10v10l-3 3H3z" fill="#f0f5f8" /><circle cx="3" cy="15" r="1.800" fill="#fff" stroke="#d05030" /></Svg></StB>
    <StB on><Svg s={16} c="#333" w={1.2}><path d="M14 5L3 14h13" /></Svg></StB>
    <StB on><Svg c="#333"><path d="M4 2v14h13M4 16L13 7" /><path d="M13 2l-3 4h3l-2 4 5-5h-3l2-3z" fill="#e8c020" stroke="#a80" strokeWidth=".5" /></Svg></StB>
    <StB on><Svg s={16} c="#222" w={1.4}><path d="M5 4v9M2 9h13M9 9v3h6" /></Svg></StB>
    <StB><Plus size={16} strokeWidth={2.2} className="text-[#111]" /></StB>
    <StB on><div className="w-[18px] h-[18px] border border-[#3a72a8] bg-[repeating-conic-gradient(#88b4e0_0_25%,#dce8f4_0_50%)] bg-[length:3px_3px]" /></StB>
    <StB><Svg s={14} c="#222"><path d="M4 2h10v14H4z" fill="#eee" /><path d="M6 5h6M6 9h1M9 9h1M12 9h1M6 13h1M9 13h1M12 13h1" strokeWidth="1.400" /></Svg></StB>
    <StB><Svg c="#333"><path d="M2 5h5M4.500 2.500v5" /><rect x="8" y="8" width="8" height="8" fill="#6a9a38" stroke="#2a5a10" /><path d="M6 6h6v2" /></Svg></StB>
    <StB><Svg c="#fff" w={0}><path d="M6 1h6v5h5v6h-5v5H6v-5H1V6h5z" fill="#f4f4f4" stroke="#555" strokeWidth="1" /></Svg></StB>
    <div className="border-l border-[#5c5c5c] h-[24px] w-[68px] shrink-0" />
    <div className="w-[28px] h-[24px] shrink-0 flex items-center justify-center text-[12px] leading-none text-black bg-[linear-gradient(#b8b8b8,#8e8e8e)] border-l border-[#5c5c5c]">模型</div>
    <StB w={22}><Svg s={17} c="#222"><path d="M3 3h12v11H3z" fill="#ddd" /><path d="M6 6v6h5z" fill="#444" /><path d="M3 16h12" strokeWidth="1.400" /></Svg></StB>
    <StB w={22}><Svg s={17} c="#222"><path d="M2 3h6v8H2zM10 3h6v8h-6z" fill="#ddd" /><path d="M2 14h14" strokeWidth="1.600" /></Svg></StB>
    <div className="w-[20px] shrink-0" />
    <div className="h-[24px] w-[54px] shrink-0 flex items-center pl-[3px] gap-[1px] bg-[linear-gradient(#b8b8b8,#8e8e8e)] border-l border-[#5c5c5c]">
      <Svg s={17} c="#f0f0f0" w={2}><path d="M9 2v7L2 16M9 9l7 7" /></Svg>
      <span className={`${MONO} text-[10px] leading-none text-black`}>1:1</span>
      <Arrow c="#111" />
    </div>
    <StB w={22}><Svg s={18} c="#f0f0f0" w={2}><path d="M7 2v7L2 16M7 9l6 7" /><circle cx="13" cy="9" r="2.500" fill="#f0d060" stroke="#c08030" strokeWidth="1" /></Svg></StB>
    <StB w={21}><Svg s={18} c="#bdbdbd" w={2}><path d="M8 2v7L2 16M8 9l7 7" /></Svg></StB>
    <div className="w-[6px] shrink-0" />
    <StB w={23}><Settings size={17} strokeWidth={1.6} className="text-[#333]" /></StB>
    <StB w={22}><LockOpen size={16} strokeWidth={1.3} className="text-[#222]" /></StB>
    <StB w={22}><div className="w-[15px] h-[15px] rounded-full bg-[radial-gradient(#f5a060,#d8651c)]" /></StB>
    <StB on w={29}><span className="text-[12px] leading-none text-black">编组</span></StB>
    <div className="w-[6px] shrink-0" />
    <div className="w-[44px] h-[22px] shrink-0 bg-[#999] flex items-center gap-[6px] pl-[3px]">
      <Svg s={18} c="#253"><path d="M1 3h13v7H1z" fill="#88a8cc" /><path d="M1 10h14v6H1z" fill="#e8c840" /><path d="M8 12l3 3 5-5" stroke="#2a9a30" strokeWidth="2" /></Svg>
      <Lightbulb size={16} strokeWidth={1.2} className="text-[#eee] fill-[#f0e090]" />
    </div>
    <div className="w-[8px] shrink-0" />
    <Arrow c="#111" />
    <div className="w-[3px] shrink-0" />
    <StB w={19}><div className="w-[14px] h-[14px] border border-[#333] border-t-[3px] bg-[#ccc]" /></StB>
    <div className="flex-1 flex justify-end pr-[3px]">
      <div className="w-[13px] h-[13px] bg-[radial-gradient(#d8d8d8_45%,transparent_50%)] bg-[length:4px_4px]" />
    </div>
  </div>
);

/* ---------- dialog ---------- */
const Check = ({ on }: { on?: boolean }) => (
  <div className="w-[13px] h-[13px] shrink-0 border border-[#3a5c80] bg-[#f5f5ef] flex items-center justify-center">
    {on && <svg width="9" height="9" viewBox="0 0 9 9" fill="none" stroke="#2ea02e" strokeWidth="1.800"><path d="M1 4.500l2.300 2.500L8 1.500" /></svg>}
  </div>
);
const Radio = ({ on }: { on?: boolean }) => (
  <div className="w-[13px] h-[13px] shrink-0 rounded-full border border-[#4a6a8c] bg-[#f6f6f0] flex items-center justify-center">
    {on && <div className="w-[5px] h-[5px] rounded-full bg-[#36a036]" />}
  </div>
);
const Field = ({ v }: { v?: string }) => (
  <div className={`${MONO} w-[92px] h-[21px] bg-white border border-[#8fa4b8] text-[10px] leading-none text-[#111] pl-[2px] pb-[2px] flex items-center`}>{v}</div>
);
const DCombo = ({ v }: { v: string }) => (
  <div className={`${MONO} w-[92px] h-[20px] ml-[2px] bg-white border border-[#8fa4b8] text-[10px] leading-none text-[#111] pl-[3px] flex items-center relative`}>
    {v}
    <div className="absolute right-0 top-0 bottom-0 w-[15px] bg-[linear-gradient(#d5e0f6,#b4c7ee)] flex items-center justify-center">
      <svg width="9" height="7" viewBox="0 0 9 7" fill="none" stroke="#3e5a94" strokeWidth="2"><path d="M1 1l3.500 4L8 1" /></svg>
    </div>
  </div>
);
const DLabel = ({ t, s }: { t: string; s?: string }) => (
  <span className="text-[12px] leading-none text-[#111] whitespace-nowrap pt-[2px]">
    {t}{s && <span className={`${MONO} text-[9px]`}>{s}</span>}
  </span>
);
const CkRow = ({ h, on, t, s, right }: { h: number; on?: boolean; t: string; s?: string; right: React.ReactNode }) => (
  <div style={{ height: h }} className="flex items-center">
    <div className="w-[100px] flex items-center gap-[3px] shrink-0"><Check on={on} /><DLabel t={t} s={s} /></div>
    {right}
  </div>
);

const Dialog = () => (
  <div className="absolute left-[137px] top-0 w-[221px] h-[284px] rounded-t-[4px] bg-[#3f68c6] p-[3px] pt-0 flex flex-col shadow-[inset_0_0_0_1px_#2e55b0]">
    <div className="h-[29px] shrink-0 flex items-center pl-[4px] rounded-t-[4px] bg-[linear-gradient(#5f86d6,#6d93dc_40%,#5a82d2)]">
      <span className="text-[14px] font-bold leading-none text-[#cfe0f6] tracking-[.5px] w-[136px]">盘管统计</span>
      <Svg s={16} c="#1c3566" w={1.4}><path d="M6 2h6v7H6z" fill="#b8e0c8" /><path d="M4 9h10M9 9v7" /></Svg>
      <Sp w={8} />
      <span className="text-[14px] font-bold leading-none text-[#e8eef8] w-[16px] text-center font-['Liberation_Mono',monospace]">?</span>
      <Sp w={10} />
      <svg width="13" height="13" viewBox="0 0 13 13" fill="none" stroke="#e8eef8" strokeWidth="2.400"><path d="M1 1l11 11M12 1L1 12" /></svg>
    </div>
    <div className="flex-1 bg-[#ece9d8] pl-[11px] pt-[9px]">
      <CkRow h={26} on t="盘管长度" s="m" right={<Field v="82.838" />} />
      <CkRow h={27} on t="盘管间距" s="mm" right={<Field v="400" />} />
      <CkRow h={26} t="负荷" s="W" right={<Field />} />
      <CkRow h={26} on t="盘管管径" right={<DCombo v="De20" />} />
      <CkRow h={25} t="文字背景屏蔽" right={
        <div className="w-[90px] h-[19px] ml-[1px] rounded-[3px] border border-[#1f3d6e] bg-[linear-gradient(#fbfbf6,#e4e0d0)] flex items-center justify-center text-[12px] leading-none text-[#111]">文字设置</div>
      } />
      <div className="h-[27px] flex items-center">
        <div className="w-[100px] shrink-0"><DLabel t="盘管统计精度" /></div>
        <DCombo v="0" />
      </div>
      <div className="h-[22px] flex items-center">
        <div className="w-[100px] shrink-0"><DLabel t="附加长度" s="m" /></div>
        <Field />
      </div>
      <div className="h-[30px] flex items-center pt-[6px]">
        <div className="w-[54px] shrink-0"><DLabel t="统计方式" /></div>
        <div className="w-[16px] shrink-0"><Radio on /></div>
        <DLabel t="统计到分水器" />
      </div>
      <div className="h-[24px] flex items-center pt-[2px]">
        <div className="w-[54px] shrink-0" />
        <div className="w-[16px] shrink-0"><Radio /></div>
        <DLabel t="统计一个并联环路" />
      </div>
    </div>
  </div>
);

export default function App() {
  return (
    <div className="relative w-[1024px] h-[768px] bg-[#6b6b6b] overflow-hidden flex flex-col font-['Noto_Sans_CJK_SC','Liberation_Sans',sans-serif]">
      <TopBar />
      <Toolbars />
      <div className="flex-1 flex min-h-0">
        <Palette />
        <div className="flex-1 flex flex-col min-w-0">
          <div className="flex h-[556px]">
            <div className="flex flex-col w-[864px] shrink-0">
              <Drawing />
              <Tabs />
            </div>
            <RightBars />
          </div>
          <div className="h-[6px]" />
          <IconBar />
          <div className="h-[8px]" />
          <Command />
        </div>
      </div>
      <Status />
      <Dialog />
    </div>
  );
}
